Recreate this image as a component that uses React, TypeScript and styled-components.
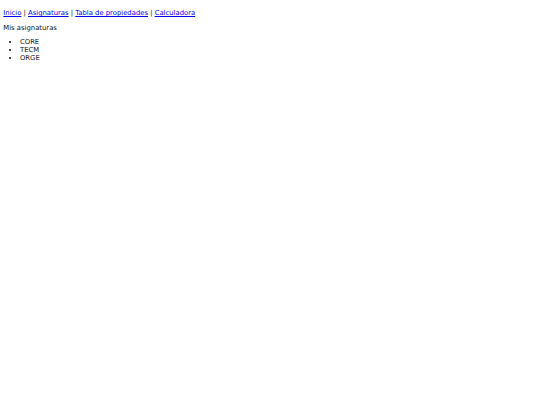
import React, { ReactElement } from "react"
import styled, { createGlobalStyle } from "styled-components"

// the page is drawn at 16px base, scaled down to fit the 540px window
const scale = 540 / 1296
const px = (n: number): string => `${(n * scale).toFixed(3)}px`

const GlobalStyle = createGlobalStyle`
	body {
		margin: ${px(8)};
		font-family: "DejaVu Sans", sans-serif;
		font-size: ${px(16.4)};
		line-height: ${px(19)};
		text-rendering: geometricPrecision;
		color: #111;
		background: #fff;
	}
`

const Nav = styled.p`
	margin: ${px(16)} 0;
`

const NavLink = styled.a`
	color: #0000ee;
	text-decoration: underline;
`

const Separator = styled.span`
	color: #111;
`

const Title = styled.p`
	margin: ${px(16)} 0;
`

const SubjectList = styled.ul`
	margin: ${px(16)} 0;
	padding-left: ${px(40)};
	list-style: disc;
`

const Subject = styled.li`
	line-height: ${px(19)};
`

const links = ["Inicio", "Asignaturas", "Tabla de propiedades", "Calculadora"]
const subjects = ["CORE", "TECM", "ORGE"]

const App = (): ReactElement => (
	<>
		<GlobalStyle />
		<Nav>
			{links.map((text, i) => (
				<React.Fragment key={text}>
					{i > 0 && <Separator> | </Separator>}
					<NavLink href="#">{text}</NavLink>
				</React.Fragment>
			))}
		</Nav>
		<Title>Mis asignaturas</Title>
		<SubjectList>
			{subjects.map(name => (
				<Subject key={name}>{name}</Subject>
			))}
		</SubjectList>
	</>
)

export default App
